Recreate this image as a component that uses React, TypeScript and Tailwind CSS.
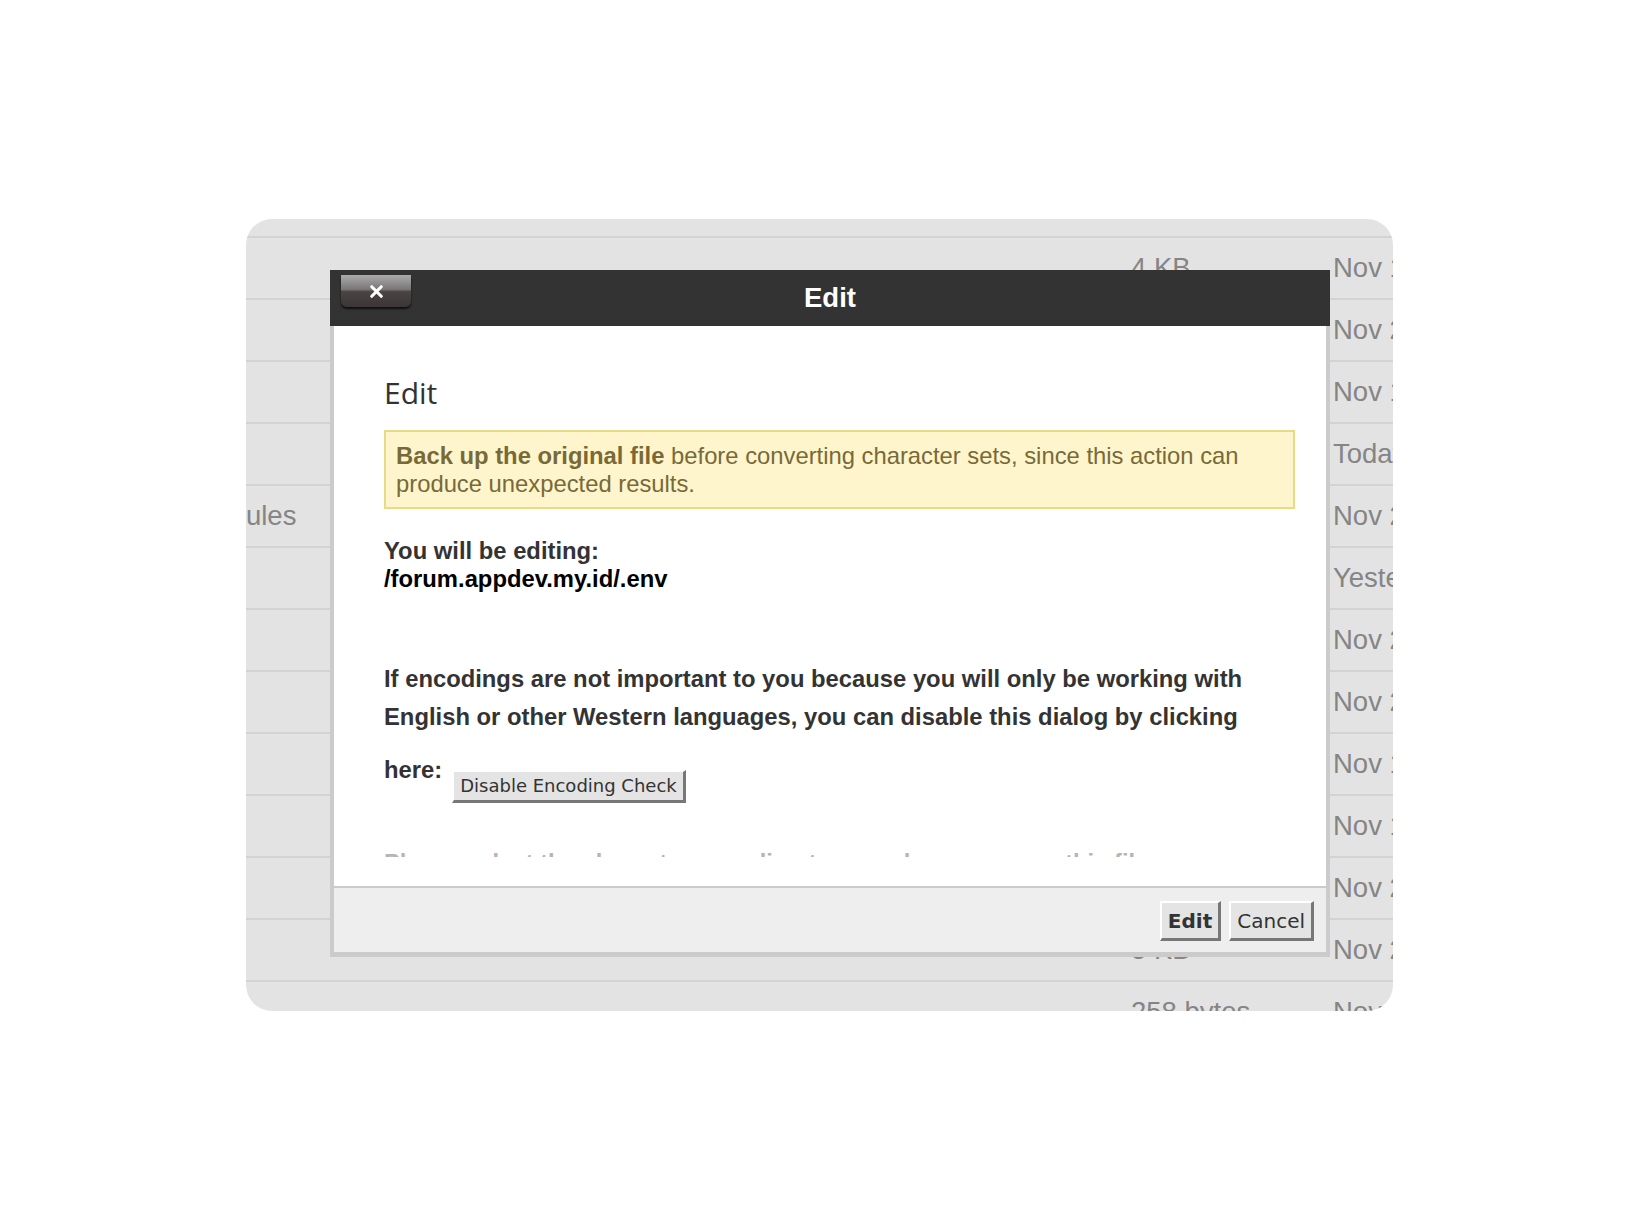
import { X } from "lucide-react";

// Background file list — only the edges show around the dialog.
const rows = [
  { name: "index.php", size: "4 KB", date: "Nov 14, 2023, 9:12 AM" },
  { name: "cache", size: "2 KB", date: "Nov 26, 2023, 4:05 PM" },
  { name: "artisan", size: "1 KB", date: "Nov 19, 2023, 1:44 PM" },
  { name: "storage", size: "4 KB", date: "Today, 10:21 AM" },
  { name: "node_modules", size: "4 KB", date: "Nov 22, 2023, 8:30 AM" },
  { name: ".env", size: "1 KB", date: "Yesterday, 6:18 PM" },
  { name: "config", size: "4 KB", date: "Nov 21, 2023, 11:02 AM" },
  { name: "public", size: "4 KB", date: "Nov 24, 2023, 3:37 PM" },
  { name: "routes", size: "4 KB", date: "Nov 15, 2023, 2:10 PM" },
  { name: "vendor", size: "4 KB", date: "Nov 18, 2023, 9:55 AM" },
  { name: "app", size: "4 KB", date: "Nov 23, 2023, 5:49 PM" },
  { name: "tests", size: "5 KB", date: "Nov 27, 2023, 7:26 AM" },
  { name: ".htaccess", size: "258 bytes", date: "Nov 20, 2023, 12:00 PM" },
];

function BevelButton({ children, bold = false, className = "" }: { children: string; bold?: boolean; className?: string }) {
  return (
    <button
      type="button"
      className={
        "flex shrink-0 items-center justify-center border-t-2 border-l-2 border-r-[3px] border-b-[3px] border-t-white border-l-white border-r-[#777] border-b-[#777] bg-[#e4e4e4] px-[6px] font-['DejaVu_Sans',sans-serif] text-[#333] " +
        (bold ? "font-bold " : "font-normal ") +
        className
      }
    >
      {children}
    </button>
  );
}

function EditDialog() {
  return (
    <div className="absolute left-[330px] top-[270px] w-[1000px]">
      {/* title bar */}
      <div className="relative flex h-[56px] items-center justify-center bg-[#333]">
        <button
          type="button"
          title="Close"
          className="absolute left-[11px] top-[5px] flex h-[32px] w-[70px] items-center justify-center rounded-b-[6px] bg-[linear-gradient(to_bottom,#ababab_0%,#7a7676_45%,#4a4444_52%,#3b3535_100%)] shadow-[0_2px_2px_rgba(0,0,0,0.7)]"
        >
          <X size={19} strokeWidth={4} className="text-white" />
        </button>
        <span className="text-[27.5px] font-bold text-white">Edit</span>
      </div>

      <div className="border-x-4 border-b-[5px] border-[#cbcbcb] bg-white">
        <div className="h-[531px] overflow-hidden pl-[50px] pr-[31px] pt-[47px]">
          <h2 className="font-['Open_Sans',sans-serif] text-[30px] leading-[40px] text-[#333]">Edit</h2>

          <div className="mt-[17px] border-2 border-[#e6db86] bg-[#fff5cd] px-[10px] pt-[10px] pb-[9px] text-[23.8px] leading-[28px] text-[#786a37]">
            <strong>Back up the original file</strong> before converting character sets, since this action can
            produce unexpected results.
          </div>

          <div className="mt-[28px] text-[23.8px] font-bold leading-[28px]">
            <div className="text-[#333]">You will be editing:</div>
            <div className="text-black">/forum.appdev.my.id/.env</div>
          </div>

          <p className="mt-[67px] w-[880px] text-[23.8px] font-bold leading-[37.5px] text-[#333]">
            If encodings are not important to you because you will only be working with English or other Western
            languages, you can disable this dialog by clicking
          </p>
          <div className="mt-[16px] flex items-start text-[23.8px] font-bold leading-[37.5px] text-[#333]">
            <span>here:</span>
            <BevelButton className="ml-[10px] mt-[19px] h-[33px] text-[18px]">Disable Encoding Check</BevelButton>
          </div>

          <p className="mt-[41px] whitespace-nowrap text-[23.8px] font-bold leading-[37.5px] text-[#b5b5b5]">
            Please select the character encoding to use when you open this file:
          </p>
        </div>
        <div className="h-[29px]" />

        <div className="flex h-[66px] items-start justify-end gap-[8px] border-t-2 border-[#cbcbcb] bg-[#eee] pr-[12px] pt-[13px]">
          <BevelButton bold className="h-[40px] text-[20px]">Edit</BevelButton>
          <BevelButton className="h-[40px] text-[20px]">Cancel</BevelButton>
        </div>
      </div>
    </div>
  );
}

export default function App() {
  return (
    <div className="relative min-h-[1230px] w-[1640px] bg-white pl-[246px] pt-[219px] font-['Liberation_Sans',Arial,sans-serif]">
      <div className="h-[792px] w-[1147px] overflow-hidden rounded-[26px] bg-[#e3e3e3]">
        <div className="h-[17px]" />
        {rows.map((r) => (
          <div
            key={r.name}
            className="flex h-[62px] items-center whitespace-nowrap border-t-2 border-[#d3d3d3] text-[27.5px] text-[#858585]"
          >
            <div className="-ml-[130px] w-[1015px] shrink-0">{r.name}</div>
            <div className="w-[202px] shrink-0">{r.size}</div>
            <div className="shrink-0">{r.date}</div>
          </div>
        ))}
      </div>
      <EditDialog />
    </div>
  );
}
